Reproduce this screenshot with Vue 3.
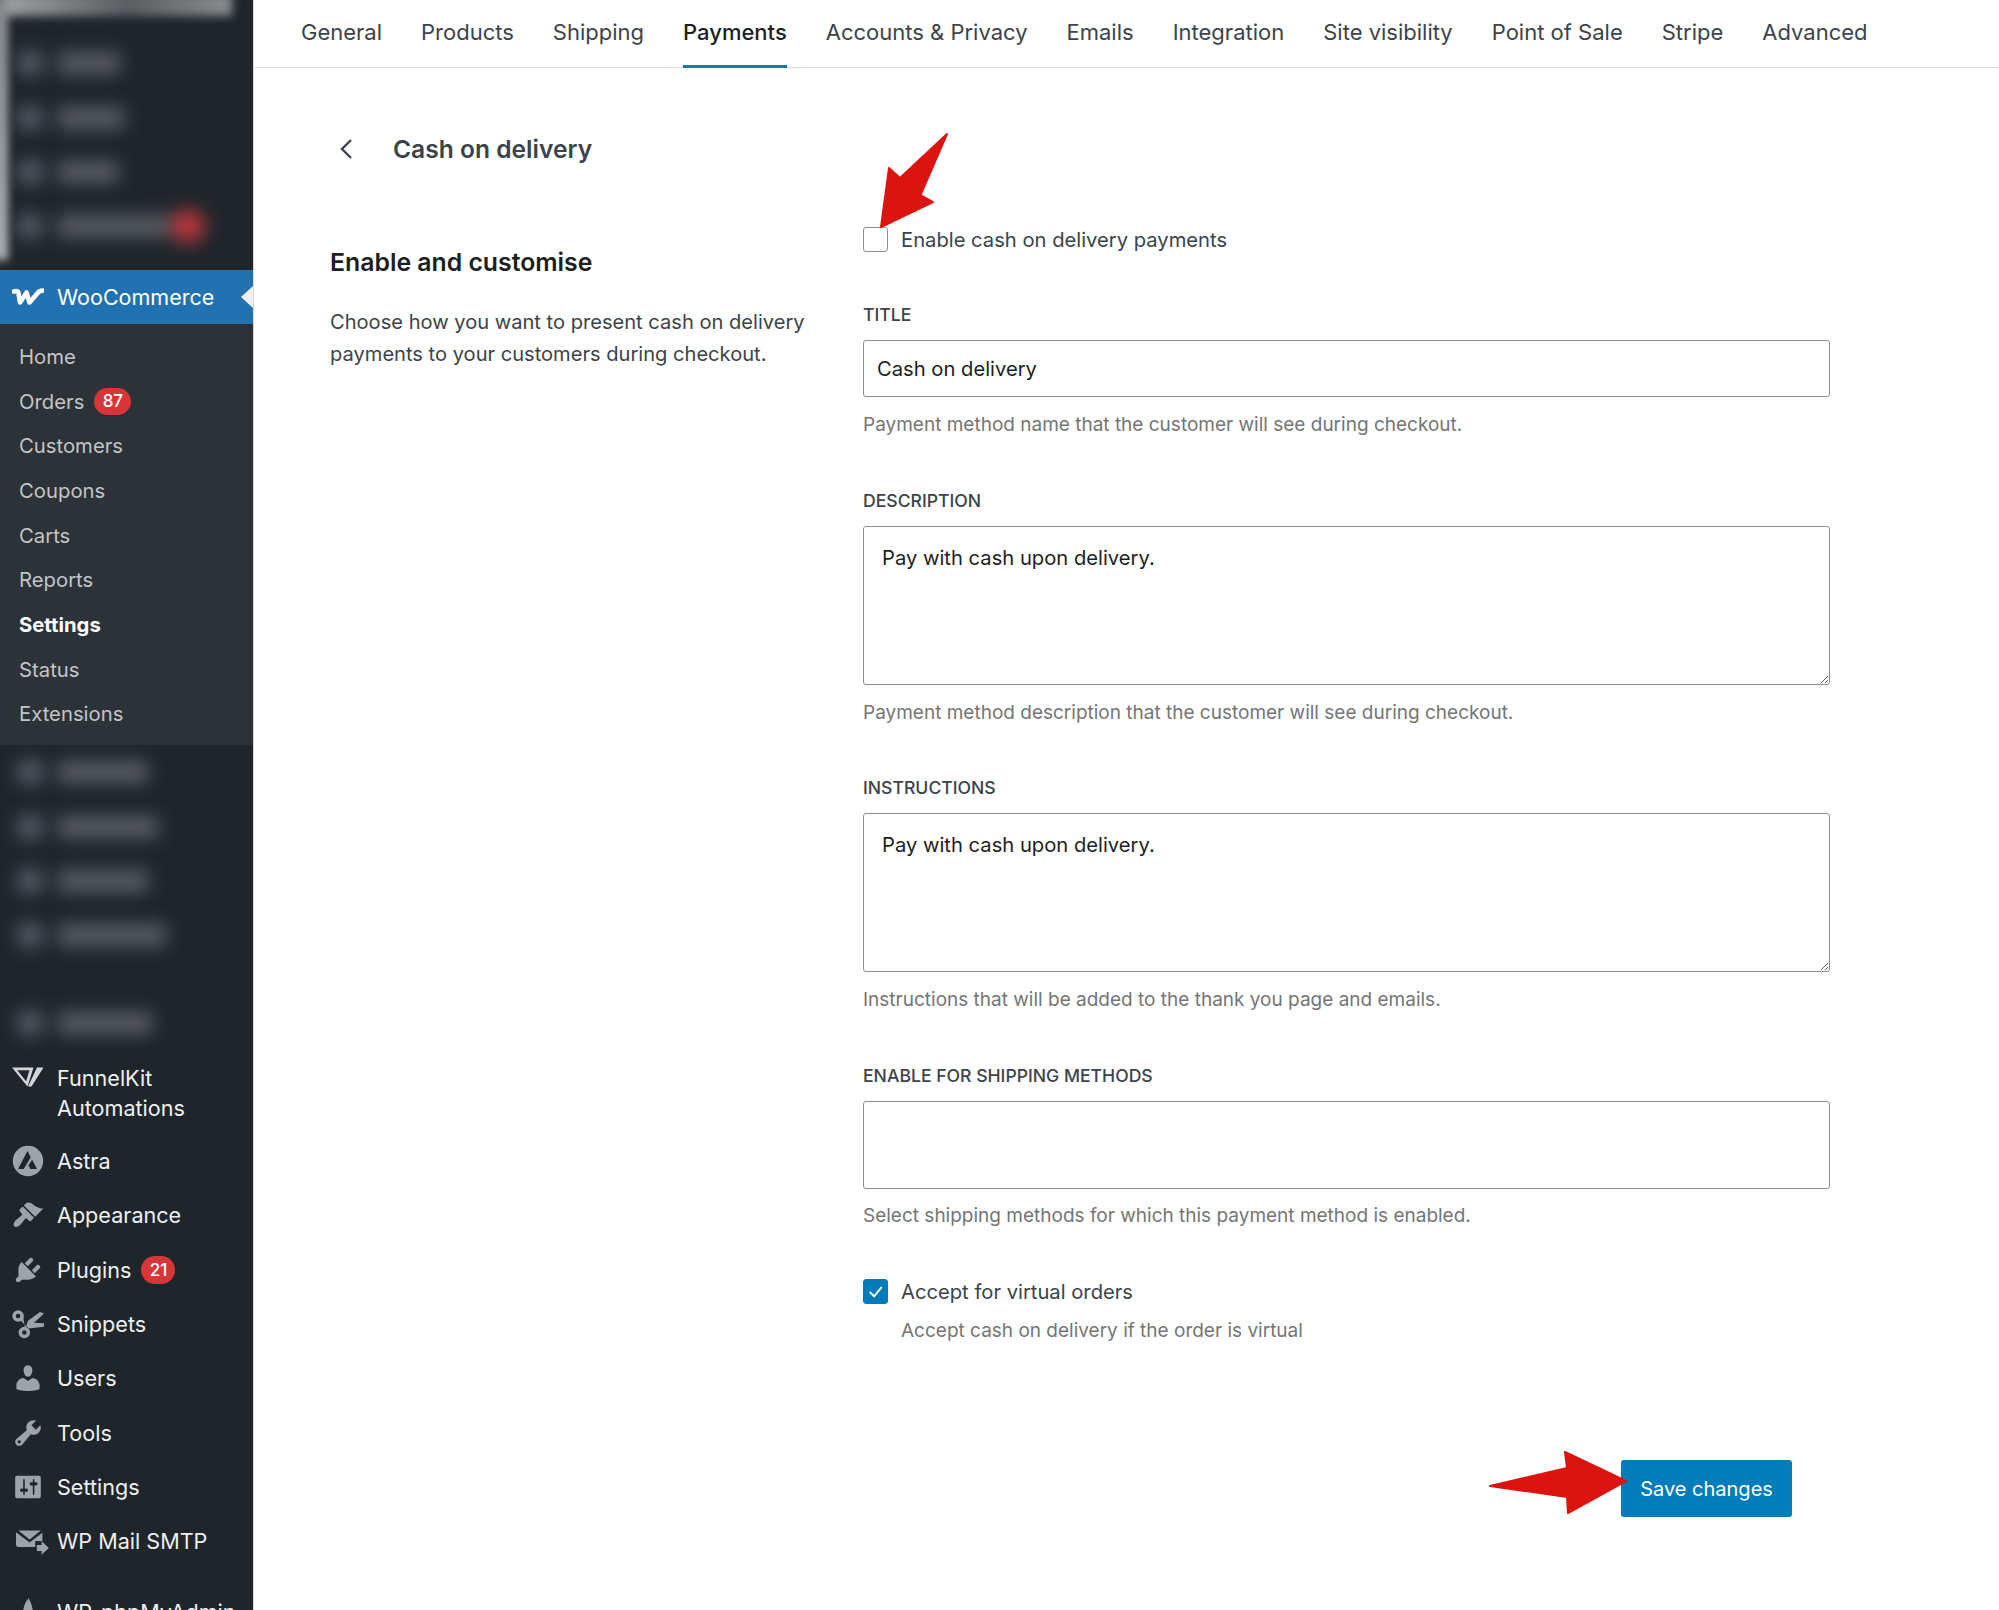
<script setup>
const tabs = ['General','Products','Shipping','Payments','Accounts & Privacy','Emails','Integration','Site visibility','Point of Sale','Stripe','Advanced']
const subs = ['Home','Orders','Customers','Coupons','Carts','Reports','Settings','Status','Extensions']
const blurTop = [62, 66, 60, 112]
const blurLow = [90, 100, 90, 108]
const icons = {
  appearance: 'M14.48 11.06L7.41 3.99l1.5-1.5c.5-.56 2.3-.47 3.51.32 1.21.8 1.43 1.28 2.91 2.1 1.18.64 2.45 1.26 4.45.85zm-.71.71L6.7 4.7 4.93 6.47c-.39.39-.39 1.02 0 1.41l1.06 1.06c.39.39.39 1.03 0 1.42-.6.6-1.43 1.11-2.21 1.69-.35.26-.7.53-1.01.84C1.43 14.23.4 16.08 1.4 17.07c.99 1 2.84-.03 4.18-1.36.31-.31.58-.66.85-1.02.57-.78 1.08-1.61 1.69-2.21.39-.39 1.02-.39 1.41 0l1.06 1.06c.39.39 1.02.39 1.41 0z',
  plugins: 'M13.11 4.36L9.87 7.6 8 5.73l3.24-3.24c.35-.34 1.05-.2 1.56.32.52.51.66 1.21.31 1.55zm-8 1.77l.91-1.12 9.01 9.01-1.19.84c-.71.71-2.63 1.16-3.82 1.16H6.14L4.9 17.26c-.59.59-1.54.59-2.12 0-.59-.58-.59-1.53 0-2.12l1.24-1.24v-3.88c0-1.13.4-3.19 1.09-3.89zm7.26 3.97l3.24-3.24c.34-.35 1.04-.21 1.55.31.52.51.66 1.21.31 1.55l-3.24 3.25z',
  users: 'M10 9.25c-2.27 0-2.73-3.44-2.73-3.44C7 4.02 7.82 2 9.97 2c2.16 0 2.98 2.02 2.71 3.81 0 0-.41 3.44-2.68 3.44zm0 2.57L12.72 10c2.39 0 4.52 2.33 4.52 4.53v2.49s-3.65 1.13-7.24 1.13c-3.65 0-7.24-1.13-7.24-1.13v-2.49c0-2.25 1.94-4.48 4.47-4.48z',
  tools: 'M16.68 9.77c-1.34 1.34-3.3 1.67-4.95.99l-5.41 6.52c-.99.99-2.59.99-3.58 0s-.99-2.59 0-3.57l6.52-5.42c-.68-1.65-.35-3.61.99-4.95 1.28-1.28 3.12-1.62 4.72-1.06l-2.89 2.89 2.82 2.82 2.86-2.87c.53 1.58.18 3.39-1.08 4.65zM3.81 16.21c.4.39 1.04.39 1.43 0 .4-.4.4-1.04 0-1.43-.39-.4-1.03-.4-1.43 0-.39.39-.39 1.03 0 1.43z',
  settings: 'M18 16V4c0-.55-.45-1-1-1H3c-.55 0-1 .45-1 1v12c0 .55.45 1 1 1h14c.55 0 1-.45 1-1zM8 11h1c.55 0 1 .45 1 1s-.45 1-1 1H8v1.5c0 .28-.22.5-.5.5s-.5-.22-.5-.5V13H6c-.55 0-1-.45-1-1s.45-1 1-1h1V5.5c0-.28.22-.5.5-.5s.5.22.5.5V11zm5-2h-1c-.55 0-1-.45-1-1s.45-1 1-1h1V5.5c0-.28.22-.5.5-.5s.5.22.5.5V7h1c.55 0 1 .45 1 1s-.45 1-1 1h-1v5.5c0 .28-.22.5-.5.5s-.5-.22-.5-.5V9z',
  astra: 'M10 .5a9.500 9.500 0 1 0 0 19 9.500 9.500 0 0 0 0-19zM3.800 15 9.700 3.800l2 3.800L7.300 15zM11.500 15l-1.200-2.400 2.300-3.400 3.100 5.800z',
  mail: 'M4 3.500h14L11 9zM2.500 4.500 11 11l8-6.200V10h-4.500v3.800H4a1.500 1.500 0 0 1-1.500-1.500zM15.500 12.500h3V10l4.500 4.300-4.500 4.300v-2.400h-3z',
}
const mains = [
  { label: 'Appearance', icon: 'appearance' },
  { label: 'Plugins', icon: 'plugins', badge: '21' },
  { label: 'Snippets', icon: 'snippets' },
  { label: 'Users', icon: 'users' },
  { label: 'Tools', icon: 'tools' },
  { label: 'Settings', icon: 'settings' },
  { label: 'WP Mail SMTP', icon: 'mail' },
]
</script>

<template>
  <div class="page">
    <aside class="side">
      <div class="blurred top">
        <div class="smear-top"></div>
        <div class="smear-left"></div>
        <div v-for="(w, i) in blurTop" :key="i" class="brow">
          <span class="blob-i"></span><span class="blob-t" :style="{ width: w + 'px' }"></span>
          <span v-if="i === 3" class="blob-r"></span>
        </div>
      </div>
      <div class="woo">
        <svg class="woo-logo" viewBox="0 0 32 18"><path d="M2 3.500 Q6 2 6.500 5 L8 14.500 L14.500 4.500 L17.500 14.500 L27 3.500 L30.500 2.500" fill="none" stroke="#fff" stroke-width="4.600" stroke-linejoin="round" stroke-linecap="round"/></svg>
        <span>WooCommerce</span>
        <i class="woo-tip"></i>
      </div>
      <ul class="subs">
        <li v-for="s in subs" :key="s" :class="{ on: s === 'Settings' }">
          {{ s }}<b v-if="s === 'Orders'" class="badge">87</b>
        </li>
      </ul>
      <div class="blurred low">
        <div v-for="(w, i) in blurLow" :key="i" class="brow">
          <span class="blob-i"></span><span class="blob-t" :style="{ width: w + 'px' }"></span>
        </div>
        <div class="brow sep">
          <span class="blob-i"></span><span class="blob-t" :style="{ width: '94px' }"></span>
        </div>
      </div>
      <div class="mrow tall">
        <svg class="ic funnel" viewBox="0 0 32 20"><path fill-rule="evenodd" d="M0 .5h21.500L15.500 19.500zM5.200 3.200l8.900 11 3.400-11z" fill="#d3d5d8"/><path d="M25 .5h6.500L19.500 19.500h-3.500z" fill="#d3d5d8"/></svg>
        <span>FunnelKit<br>Automations</span>
      </div>
      <div class="mrow">
        <svg class="ic" viewBox="0 0 20 20"><path :d="icons.astra" fill="#9ea3a8" fill-rule="evenodd"/></svg>
        <span>Astra</span>
      </div>
      <div v-for="m in mains" :key="m.label" class="mrow">
        <svg v-if="m.icon === 'snippets'" class="ic" viewBox="0 0 20 20">
          <circle cx="3.800" cy="5" r="2.500" fill="none" stroke="#9ea3a8" stroke-width="2.200"/>
          <circle cx="7.700" cy="15.300" r="2.500" fill="none" stroke="#9ea3a8" stroke-width="2.200"/>
          <path d="M8.300 13.200 10 8 17.500 2.500 20 3.500 13.800 9.200 20 9.500 20 11.700 10.500 12.800 5.500 8 7 5.800z" fill="#9ea3a8"/>
        </svg>
        <svg v-else class="ic iconvis" viewBox="0 0 20 20"><path :d="icons[m.icon]" fill="#9ea3a8"/></svg>
        <span>{{ m.label }}</span>
        <b v-if="m.badge" class="badge big">{{ m.badge }}</b>
      </div>
      <div class="mrow last">
        <svg class="ic pma" viewBox="0 0 20 20"><path d="M10 1c2 3 3 6 3 10H7c0-4 1-7 3-9z" fill="#9ea3a8"/></svg>
        <span>WP-phpMyAdmin</span>
      </div>
    </aside>

    <main class="main">
      <nav class="tabs">
        <a v-for="t in tabs" :key="t" :class="{ active: t === 'Payments' }">{{ t }}</a>
      </nav>
      <div class="content">
        <section class="intro">
          <div class="back">
            <svg class="chev" viewBox="0 0 16 24"><path d="M12 3 3 12l9 9" fill="none" stroke="#3c434a" stroke-width="2.400"/></svg>
            <h2>Cash on delivery</h2>
          </div>
          <h3>Enable and customise</h3>
          <p>Choose how you want to present cash on delivery payments to your customers during checkout.</p>
        </section>
        <section class="form">
          <label class="check first"><span class="box"></span>Enable cash on delivery payments</label>

          <label class="cap t1">TITLE</label>
          <input class="field" value="Cash on delivery" />
          <p class="help">Payment method name that the customer will see during checkout.</p>

          <label class="cap">DESCRIPTION</label>
          <textarea class="area">Pay with cash upon delivery.</textarea>
          <p class="help">Payment method description that the customer will see during checkout.</p>

          <label class="cap c2">INSTRUCTIONS</label>
          <textarea class="area">Pay with cash upon delivery.</textarea>
          <p class="help">Instructions that will be added to the thank you page and emails.</p>

          <label class="cap">ENABLE FOR SHIPPING METHODS</label>
          <div class="ship"></div>
          <p class="help tight">Select shipping methods for which this payment method is enabled.</p>

          <label class="check second">
            <span class="box on"><svg viewBox="0 0 24 24"><path d="M6 12.500 10.500 17 18.500 7.500" fill="none" stroke="#fff" stroke-width="2"/></svg></span>
            Accept for virtual orders
          </label>
          <p class="sub">Accept cash on delivery if the order is virtual</p>

          <div class="actions"><button class="save">Save changes</button></div>
        </section>
      </div>
    </main>

    <svg class="arrows" viewBox="0 0 1999 1610">
      <path d="M881 227 889 168 900 178 947 134 920.500 195 933 202Z" fill="#dc1410" stroke="#dc1410" stroke-width="2" stroke-linejoin="round"/>
      <path d="M1490 1486 1567 1468 1565 1452 1626 1481 1568 1513 1567 1497Z" fill="#dc1410" stroke="#dc1410" stroke-width="2" stroke-linejoin="round"/>
    </svg>
  </div>
</template>

<style>
html, body { margin: 0; overflow: hidden; background: #fff; }
</style>

<style scoped>
* { box-sizing: border-box; }
.page { position: relative; display: flex; width: 1999px; height: 1610px; overflow: hidden; font-family: Inter, "Liberation Sans", sans-serif; background: #fff; }
.side { width: 254px; flex: none; height: 1610px; overflow: hidden; background: #1f262b; color: #eef0f1; border-right: 1px solid #d8d8d8; }
.blurred { position: relative; overflow: hidden; }
.top { height: 270px; padding-top: 36px; }
.smear-top { position: absolute; left: 0; top: -8px; width: 232px; height: 24px; background: linear-gradient(90deg, #a0a3a6, #5a5f63 55%, #8a8d90); filter: blur(5px); }
.smear-left { position: absolute; left: -6px; top: 0; width: 14px; height: 260px; background: linear-gradient(#8a8d90, #b4b6b8); filter: blur(4px); }
.brow { display: flex; align-items: center; height: 54.4px; padding-left: 17px; gap: 15px; filter: blur(9px); }
.sep { margin-top: 33px; }
.blob-i { width: 26px; height: 26px; border-radius: 50%; background: #585d69; flex: none; }
.blob-t { height: 22px; background: #585d61; flex: none; }
.blob-r { width: 34px; height: 34px; border-radius: 50%; background: #b8363c; margin-left: -14px; }
.woo { position: relative; display: flex; align-items: center; height: 54px; padding-left: 12px; padding-bottom: 1px; background: #2271b1; color: #fff; font-size: 21.500px; }
.woo-logo { width: 32px; height: 18px; margin-right: 13px; }
.woo-tip { position: absolute; right: 0; top: 16px; border: 11px solid transparent; border-left: 0; border-right: 12px solid #f0f0f1; }
.subs { list-style: none; margin: 0; padding: 10px 0 7px; height: 421px; background: #2c3338; color: #c3c4c7; font-size: 20.300px; }
.subs li { display: flex; align-items: center; height: 44.700px; padding-left: 19px; }
.subs li.on { color: #fff; font-weight: 700; }
.badge { display: inline-flex; align-items: center; justify-content: center; width: 37px; height: 27px; margin-left: 10px; border-radius: 14px; background: #d63638; color: #fff; font-size: 17px; font-weight: 500; }
.mrow { display: flex; align-items: center; height: 54.300px; padding-left: 12px; font-size: 21.600px; color: #eef0f1; }
.mrow.tall { height: 80px; margin-top: 4px; line-height: 30px; align-items: flex-start; padding-top: 9px; }
.mrow.last { margin-top: 17px; }
.ic { width: 32px; height: 32px; margin-right: 13px; flex: none; }
.iconvis { overflow: visible; }
.funnel { height: 20px; margin-top: 4px; }
.badge.big { width: 34px; height: 28px; margin-left: 10px; }
.main { flex: 1; min-width: 0; }
.tabs { display: flex; gap: 39px; height: 68px; padding-left: 47px; border-bottom: 1px solid #e0e0e0; }
.tabs a { display: flex; align-items: center; height: 68px; padding-bottom: 1px; border-bottom: 3px solid transparent; color: #3c434a; font-size: 22px; white-space: nowrap; }
.tabs a.active { color: #1e1e1e; font-weight: 500; border-bottom-color: #007cba; }
.content { display: flex; }
.intro { width: 609px; flex: none; padding-left: 76px; }
.back { display: flex; align-items: center; height: 40px; margin-top: 61px; }
.chev { width: 16px; height: 24px; margin-left: 9px; margin-right: 38px; }
h2 { margin: 0; color: #3c434a; font-size: 24.600px; font-weight: 600; }
h3 { margin: 75px 0 0; height: 36px; line-height: 36px; color: #1e1e1e; font-size: 24.800px; font-weight: 600; }
.intro p { margin: 26px 0 0; color: #3c434a; font-size: 20.100px; line-height: 32px; }
.form { width: 967px; flex: none; padding-top: 158px; }
.check { display: flex; align-items: center; gap: 13px; height: 26px; color: #3c434a; font-size: 20.200px; }
.box { width: 25px; height: 25px; flex: none; border: 1px solid #8c8f94; border-radius: 3px; background: #fff; }
.box.on { background: #007cba; border-color: #007cba; }
.box.on svg { display: block; width: 23px; height: 23px; }
.cap { display: block; height: 25px; margin-top: 50px; margin-bottom: 13px; line-height: 25px; color: #3c434a; font-size: 17.600px; font-weight: 500; }
.cap.t1 { margin-top: 50px; }
.cap.c2 { margin-top: 49px; }
.field, .area, .ship { display: block; width: 967px; border: 1.500px solid #8c8f94; border-radius: 3px; background: #fff; color: #1e1e1e; font-family: inherit; font-size: 20.200px; outline: 0; }
.field { height: 57px; padding: 0 13px; }
.area { height: 159px; padding: 16px 18px; line-height: 30px; resize: vertical; }
.ship { height: 88px; }
.help { margin: 14px 0 0; height: 27px; line-height: 27px; color: #757575; font-size: 19px; }
.help.tight { margin-top: 13px; }
.check.second { margin-top: 49px; }
.sub { margin: 13px 0 0 38px; height: 27px; line-height: 27px; color: #757575; font-size: 19px; }
.actions { display: flex; justify-content: flex-end; padding-right: 38px; margin-top: 116px; }
.save { width: 171px; height: 57px; border: 0; border-radius: 3px; background: #007cba; color: #fff; font-family: inherit; font-size: 20px; }
.arrows { position: absolute; left: 0; top: 0; width: 1999px; height: 1610px; pointer-events: none; }
</style>
